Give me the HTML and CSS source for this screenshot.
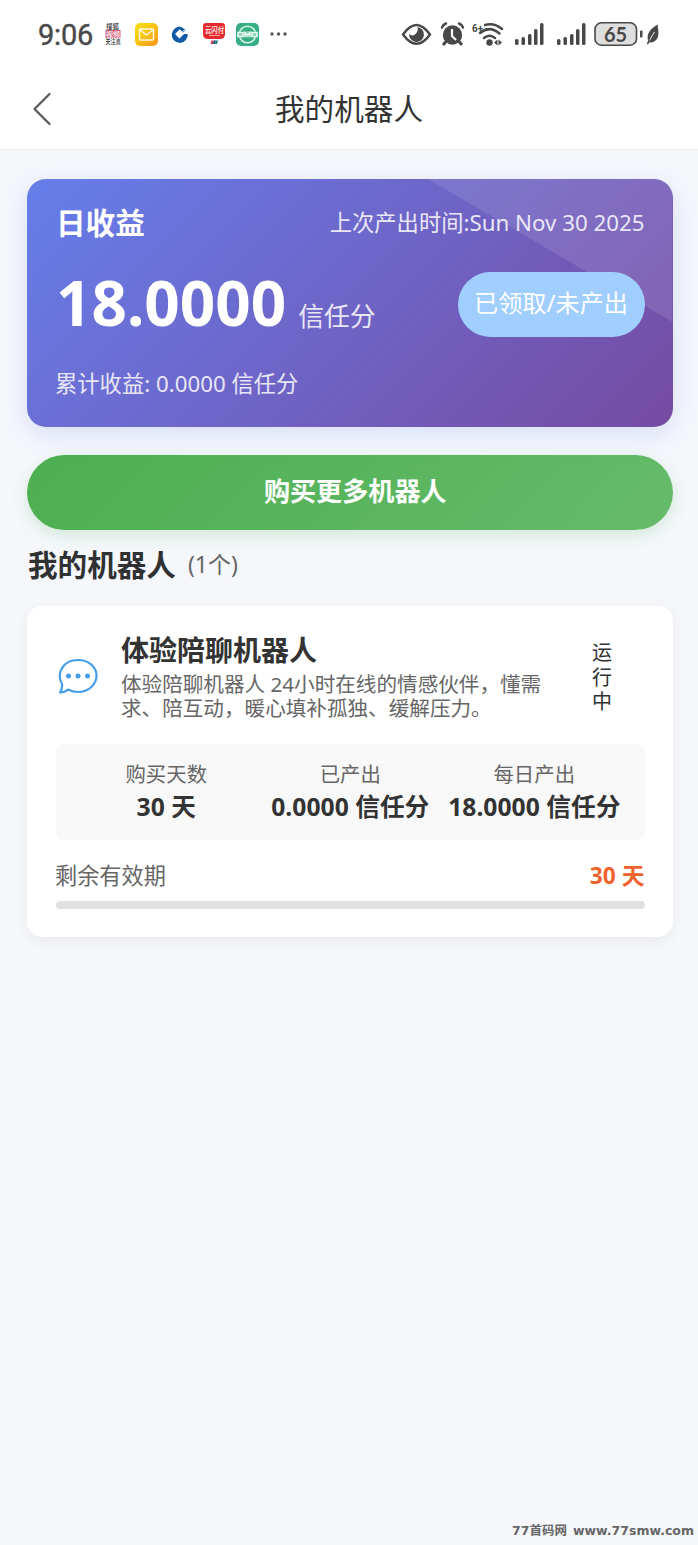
FILE: index.html
```html
<!DOCTYPE html>
<html lang="zh-CN">
<head>
<meta charset="utf-8">
<title>我的机器人</title>
<link rel="stylesheet" href="styles.css">
</head>
<body>
<header class="top">
  <div class="status">
    <span class="clock">9:06</span>
    <svg class="apps" width="190" height="28" viewBox="0 0 190 28">
      <rect x="3.500" y="10" width="15" height="8" fill="#cf5c78"/>
      <g class="tiny">
        <text x="4" y="9" textLength="13" lengthAdjust="spacingAndGlyphs" fill="#333">搜狐</text>
        <text x="4" y="16.500" textLength="14" lengthAdjust="spacingAndGlyphs" fill="#fff">视频</text>
        <text x="3.500" y="24" textLength="15" lengthAdjust="spacingAndGlyphs" fill="#333">关注流</text>
      </g>
      <defs><linearGradient id="mail" x1="0" y1="0" x2="1" y2="1"><stop stop-color="#f2df16"/><stop offset=".45" stop-color="#fac414"/><stop offset="1" stop-color="#f7931e"/></linearGradient></defs>
      <rect x="33" y="3" width="23" height="23" rx="5" fill="url(#mail)"/>
      <g fill="none" stroke="#fffbe0" stroke-width="1.500" stroke-linejoin="round"><rect x="37.500" y="9" width="14" height="11" rx="1"/><path d="M38 10l6.500 5 6.500-5"/></g>
      <path d="M80 7.200A8 8 0 1 0 85.700 14H82l-4.500 4.500-4.500-4.500 4.500-4.500z" fill="#1059a8"/>
      <path d="M79 7l5 3-3 2.500-4-4z" fill="#1059a8"/>
      <path d="M80.500 11.500l5-3" stroke="#fff" stroke-width="1"/>
      <path d="M104 3h16q3 0 3 3v8q0 5-5 5h-12q-5 0-5-5V6q0-3 3-3z" fill="#e62b2e"/>
      <text x="103" y="13" class="pay" textLength="19" lengthAdjust="spacingAndGlyphs">云闪付</text>
      <path d="M107 15.500h11" stroke="#f7a2a0"/>
      <path d="M109.500 20.500h2.500l-1 3.500h-2.500z" fill="#c7334f"/><path d="M112 20.500h2l-1 3.500h-2z" fill="#174b83"/><path d="M114 20.500h2l-1 3.500h-2z" fill="#147f79"/>
      <rect x="134" y="3" width="23" height="23" rx="5" fill="#36ad83"/>
      <circle cx="145.500" cy="14.500" r="8.300" fill="none" stroke="#d9f5e9" stroke-width="1.500"/>
      <rect x="135" y="11.500" width="21" height="6" fill="#8fd5bb"/>
      <path d="M136 12.500h5v4h-5zm7 4v-4l2.500 3 2.500-3v4m2-4h5v4h-5z" fill="none" stroke="#f0fff8" stroke-width="1.200"/>
      <g fill="#555"><circle cx="170" cy="14" r="1.700"/><circle cx="176.500" cy="14" r="1.700"/><circle cx="183" cy="14" r="1.700"/></g>
    </svg>
    <svg class="system" width="264" height="30" viewBox="0 0 264 30" fill="#484848">
      <path d="M3 14.500Q16.500-4.500 30 14.500Q16.500 33 3 14.500z" fill="none" stroke="#484848" stroke-width="2.500" stroke-linejoin="round"/>
      <path d="M17.500 7A7.500 7.500 0 1 1 9 14q4 3 7-.5 2.500-3 1.500-6.500z"/>
      <circle cx="52.500" cy="15" r="9.700"/>
      <path d="M46.500 21l-3.500 4M58.500 21l3.500 4" stroke="#484848" stroke-width="3"/>
      <path d="M42 7.500q1-3 4-4M63 7.500q-1-3-4-4" fill="none" stroke="#484848" stroke-width="2.400" stroke-linecap="round"/>
      <path d="M52 9v7l4 4" fill="none" stroke="#fff" stroke-width="2.200"/>
      <text x="72" y="11.500" class="wifi" textLength="11" lengthAdjust="spacingAndGlyphs">6+</text>
      <g fill="none" stroke="#484848" stroke-width="2.500" stroke-linecap="round"><path d="M85 5q9-2.500 17 4"/><path d="M80 13q9.500-8 19.500.5"/><path d="M84 18q5.500-4.500 11 0"/></g>
      <circle cx="89.500" cy="22.500" r="3.200"/><path d="M94 22.500l3.500-3v6zM98.500 19.500v6l3.500-3z"/>
      <g id="signal"><rect x="115" y="19" width="3.500" height="6" rx="1.500"/><rect x="121.500" y="17" width="3.500" height="8" rx="1.500"/><rect x="128" y="14" width="3.500" height="11" rx="1.500"/><rect x="134" y="9" width="3.500" height="16" rx="1.500"/><rect x="140" y="3" width="3.500" height="22" rx="1.500"/></g>
      <use href="#signal" x="42"/>
      <rect x="195" y="2.800" width="41.500" height="22.400" rx="6.500" fill="#dedede" stroke="#484848" stroke-width="1.600"/>
      <text x="204" y="21.500" class="battery" textLength="23">65</text>
      <rect x="240" y="10.500" width="2.500" height="7" rx="1"/>
      <path d="M257.500 4.500c1 7 2.500 14-3.500 17-2 1.200-3.500 1-4.500.7l-1.500 2.300-1.200-.8 1.300-3c-2-8 3-12 9.400-16.200z"/><path d="M249.500 20.500q2.500-5 5-8.500" fill="none" stroke="#fff" stroke-width=".9"/>
    </svg>
  </div>
  <nav class="nav">
    <svg class="back" width="20" height="34" viewBox="0 0 20 34"><path d="M17.500 2L2.500 17l15 15" fill="none" stroke="#5b5b5b" stroke-width="2.300" stroke-linecap="round" stroke-linejoin="round"/></svg>
    <h1 class="title">我的机器人</h1>
  </nav>
</header>
<main class="page">
  <section class="income">
    <div class="row income-head"><h2 class="income-title">日收益</h2><span class="time">上次产出时间:Sun Nov 30 2025</span></div>
    <div class="row income-main">
      <div class="amount"><strong class="number">18.0000</strong><span class="unit">信任分</span></div>
      <button class="claim">已领取/未产出</button>
    </div>
    <div class="total">累计收益: 0.0000 信任分</div>
  </section>
  <button class="buy">购买更多机器人</button>
  <div class="section-title"><h2 class="mine">我的机器人</h2><span class="count">(1个)</span></div>
  <article class="robot">
    <div class="robot-head">
      <svg class="chat" width="42" height="38" viewBox="0 0 42 38"><path d="M5 26C-1 15 6 2 21 2c11 0 18.500 7 18.500 15.500S32 34 21 34c-4 0-7-1-10-2.500-2 2-5 3-8 3 2-3 2.500-5 2-8.500z" fill="none" stroke="#479ee8" stroke-width="2.200" stroke-linejoin="round"/><g fill="#479ee8"><circle cx="11.500" cy="18" r="2.500"/><circle cx="21" cy="18" r="2.500"/><circle cx="30.500" cy="18" r="2.500"/></g></svg>
      <div class="info"><h3 class="name">体验陪聊机器人</h3><p class="desc">体验陪聊机器人 24小时在线的情感伙伴，懂需<br>求、陪互动，暖心填补孤独、缓解压力。</p></div>
      <div class="state">运<br>行<br>中</div>
    </div>
    <div class="stats">
      <div class="stat"><span class="label">购买天数</span><strong class="value">30 天</strong></div>
      <div class="stat"><span class="label">已产出</span><strong class="value">0.0000 信任分</strong></div>
      <div class="stat"><span class="label">每日产出</span><strong class="value">18.0000 信任分</strong></div>
    </div>
    <div class="row validity"><span>剩余有效期</span><strong class="days">30 天</strong></div>
    <div class="bar"></div>
  </article>
</main>
<footer class="mark"><span>77首码网</span><span class="site">www.77smw.com</span></footer>
</body>
</html>
```
FILE: styles.css
```css
* { box-sizing: border-box; margin: 0; }
body {
  display: flex; flex-direction: column; height: 1545px;
  background: #f5f7fb; color: #303133;
  font-family: "Noto Sans", "Noto Sans CJK SC", sans-serif;
}
button { border: 0; padding: 0; font-family: inherit; color: #fff; }
.row { display: flex; justify-content: space-between; align-items: center; }
.top { height: 150px; background: #fff; border-bottom: 1px solid #ececee; }
.status { display: flex; height: 68px; padding: 20px 34px 0 38px; }
.clock { width: 64px; font: 400 29px/30px Roboto, sans-serif; color: #484848; letter-spacing: -.2px; -webkit-text-stroke: .4px #484848; }
.system { margin-left: auto; }
.tiny { font: 500 7px "Noto Sans CJK SC", sans-serif; }
.pay { font: 500 7.5px "Noto Sans CJK SC", sans-serif; fill: #fff; }
.wifi { font: 700 11px Roboto, sans-serif; }
.battery { font: 700 20px Lato, sans-serif; }
.nav { display: grid; grid-template-columns: 80px 1fr 80px; align-items: center; height: 81px; }
.back { margin-left: 32px; }
.title { font-size: 29.6px; line-height: 40px; font-weight: 400; text-align: center; color: #333; }
.page { flex: 1; padding: 29px 25.5px 0 27px; }
.income {
  position: relative; height: 248px; padding: 24px 28px 0 29px; border-radius: 19px;
  background: linear-gradient(135deg, #667eea 0%, #764ba2 100%); color: #fff;
  box-shadow: 0 7px 26px rgba(102, 126, 234, .2);
}
.income::before {
  content: ""; position: absolute; inset: 0; border-radius: 19px;
  background: rgba(255, 255, 255, .11);
  clip-path: polygon(401px 0, 100% 0, 100% 143px);
}
.income > * { position: relative; }
.income-head { height: 40px; }
.income-title { font-size: 29.6px; line-height: 40px; }
.time { font-size: 22.3px; line-height: 32px; color: #e9e6f8; white-space: nowrap; }
.income-main { height: 65px; margin-top: 29px; }
.amount { display: flex; align-items: baseline; margin-top: -5px; }
.number { font-size: 62px; line-height: 64px; }
.unit { margin-left: 12px; font-size: 25.8px; color: #e9e6f8; }
.claim { width: 187px; height: 65px; padding-bottom: 3px; border-radius: 33px; background: #a0cfff; font-size: 24.2px; line-height: 62px; }
.total { margin-top: 31px; margin-left: -1px; font-size: 22.3px; line-height: 32px; color: #e9e6f8; }
.buy {
  display: block; width: 100%; height: 75px; margin-top: 28px; padding-left: 11px; border-radius: 38px;
  background: linear-gradient(135deg, #4caf50, #66bb6a); box-shadow: 0 5px 16px rgba(76, 175, 80, .2);
  font-size: 26.1px; font-weight: 700; line-height: 73px; padding-bottom: 2px;
}
.section-title { display: flex; align-items: center; height: 40px; margin-top: 15px; }
.mine { margin-left: 1px; font-size: 29.6px; line-height: 40px; }
.count { margin-left: 12px; padding-bottom: 2px; font-size: 23px; line-height: 32px; color: #666; }
.robot { height: 331px; margin-top: 21px; padding: 28px 28px 0 29px; border-radius: 15px; background: #fff; box-shadow: 0 4px 14px rgba(0, 0, 0, .055); }
.robot-head { display: flex; height: 88px; }
.chat { margin: 24px 25px 0 1px; flex: none; }
.info { width: 440px; margin-left: -3px; }
.name { font-size: 28px; line-height: 32px; color: #333; }
.desc { margin-top: 6px; font-size: 20.6px; line-height: 24px; color: #666; white-space: nowrap; }
.state { margin: 7px 0 0 31px; font-size: 20px; line-height: 24.5px; color: #303133; }
.stats { display: grid; grid-template-columns: repeat(3, 184px); justify-content: center; height: 96px; margin-top: 22px; padding-top: 15px; border-radius: 9px; background: #f8f8f8; }
.stat { display: flex; flex-direction: column; align-items: center; white-space: nowrap; }
.label { font-size: 20.4px; line-height: 30px; color: #666; }
.value { font-size: 24.7px; line-height: 36px; color: #333; }
.validity { height: 32px; margin-top: 20px; font-size: 22.2px; line-height: 32px; color: #666; }
.validity > span { margin-left: -1px; }
.days { font-size: 22.8px; color: #f0622d; }
.bar { height: 8px; margin-top: 9px; border-radius: 4px; background: #e0e0e0; }
.mark { display: flex; justify-content: flex-end; gap: 6px; height: 26px; padding-right: 4px; font: 700 12.5px/24px "DejaVu Sans", "Noto Sans CJK SC", sans-serif; color: #666; }
```
